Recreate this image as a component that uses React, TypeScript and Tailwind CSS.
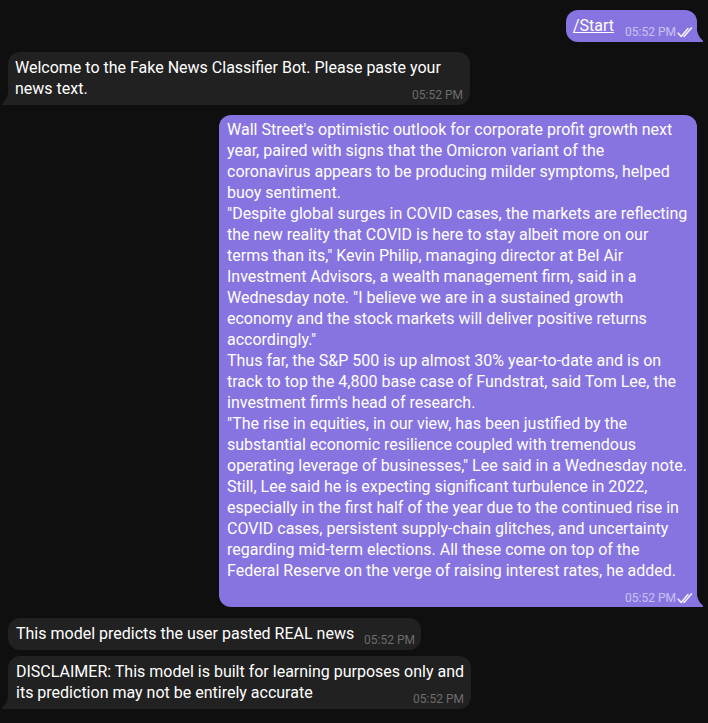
import React from "react";

const NEWS_LINES = [
  "Wall Street's optimistic outlook for corporate profit growth next",
  "year, paired with signs that the Omicron variant of the",
  "coronavirus appears to be producing milder symptoms, helped",
  "buoy sentiment.",
  "\"Despite global surges in COVID cases, the markets are reflecting",
  "the new reality that COVID is here to stay albeit more on our",
  "terms than its,\" Kevin Philip, managing director at Bel Air",
  "Investment Advisors, a wealth management firm, said in a",
  "Wednesday note. \"I believe we are in a sustained growth",
  "economy and the stock markets will deliver positive returns",
  "accordingly.\"",
  "Thus far, the S&P 500 is up almost 30% year-to-date and is on",
  "track to top the 4,800 base case of Fundstrat, said Tom Lee, the",
  "investment firm's head of research.",
  "\"The rise in equities, in our view, has been justified by the",
  "substantial economic resilience coupled with tremendous",
  "operating leverage of businesses,\" Lee said in a Wednesday note.",
  "Still, Lee said he is expecting significant turbulence in 2022,",
  "especially in the first half of the year due to the continued rise in",
  "COVID cases, persistent supply-chain glitches, and uncertainty",
  "regarding mid-term elections. All these come on top of the",
  "Federal Reserve on the verge of raising interest rates, he added.",
];

const Tail: React.FC<{ out?: boolean }> = ({ out }) => (
  <svg
    width="9"
    height="17"
    viewBox="0 0 9 17"
    className={
      out
        ? "absolute bottom-0 right-[-8px] fill-[#8774e1]"
        : "absolute bottom-0 left-[-8px] fill-[#212121] -scale-x-100"
    }
  >
    <path d="M0 0c.2 2.9.9 5.9 2.1 8.9.9 2.4 2.5 4.6 4.7 6.6A.9.9 0 016.2 17H0z" />
  </svg>
);

const Checks = () => (
  <svg
    width="16"
    height="11"
    viewBox="0 0 16 11"
    fill="none"
    stroke="currentColor"
    strokeWidth="1.6"
    strokeLinecap="round"
    strokeLinejoin="round"
    className="ml-[1px] mb-[1px] text-[#f3f0ff]"
  >
    <path d="M1.2 6.2l3 3.3 6.8-8" />
    <path d="M7 9.5l7.4-8.6" />
  </svg>
);

const InTime = () => (
  <span className="text-[12px] leading-[14px] text-white/35 mb-[-3px] whitespace-nowrap">
    05:52 PM
  </span>
);

const OutTime = () => (
  <span className="flex items-end mb-[-3px] text-[12px] leading-[14px] text-white/55 whitespace-nowrap">
    05:52 PM
    <Checks />
  </span>
);

export default function App() {
  return (
    <div className="min-h-screen bg-[#0f0f0f] text-white font-['Roboto',sans-serif] text-[16px] leading-[21px] pt-[10px] pl-[8px] pr-[11px] flex flex-col">
      {/* /Start */}
      <div className="flex justify-end">
        <div className="relative bg-[#8774e1] rounded-[12px] rounded-br-none w-[131px] pl-[7px] pr-[4px] pt-[5px] pb-[6px] flex items-end justify-between">
          <span className="underline">/Start</span>
          <OutTime />
          <Tail out />
        </div>
      </div>

      {/* welcome */}
      <div className="flex mt-[10px]">
        <div className="relative bg-[#212121] rounded-[12px] rounded-bl-none w-[462px] pl-[7px] pr-[7px] pt-[5px] pb-[6px]">
          <div className="whitespace-nowrap">
            Welcome to the Fake News Classifier Bot. Please paste your
          </div>
          <div className="flex items-end justify-between">
            <span>news text.</span>
            <InTime />
          </div>
          <Tail />
        </div>
      </div>

      {/* pasted news */}
      <div className="flex justify-end mt-[10px]">
        <div className="relative bg-[#8774e1] rounded-[12px] rounded-br-none w-[478px] pl-[8px] pr-[4px] pt-[4px] pb-[4px]">
          {NEWS_LINES.map((line, i) => (
            <div key={i} className="whitespace-nowrap">
              {line}
            </div>
          ))}
          <div className="flex justify-end items-end h-[22px] pb-[1px]">
            <OutTime />
          </div>
          <Tail out />
        </div>
      </div>

      {/* prediction */}
      <div className="flex mt-[11px]">
        <div className="bg-[#212121] rounded-[12px] w-[413px] pl-[8px] pr-[6px] pt-[5px] pb-[6px] flex items-end justify-between">
          <span className="whitespace-nowrap">This model predicts the user pasted REAL news</span>
          <InTime />
        </div>
      </div>

      <div className="flex mt-[6px]">
        <div className="relative bg-[#212121] rounded-[12px] rounded-bl-none w-[463px] pl-[8px] pr-[7px] pt-[5px] pb-[6px]">
          <div className="whitespace-nowrap">
            DISCLAIMER: This model is built for learning purposes only and
          </div>
          <div className="flex items-end justify-between">
            <span>its prediction may not be entirely accurate</span>
            <InTime />
          </div>
          <Tail />
        </div>
      </div>
    </div>
  );
}
